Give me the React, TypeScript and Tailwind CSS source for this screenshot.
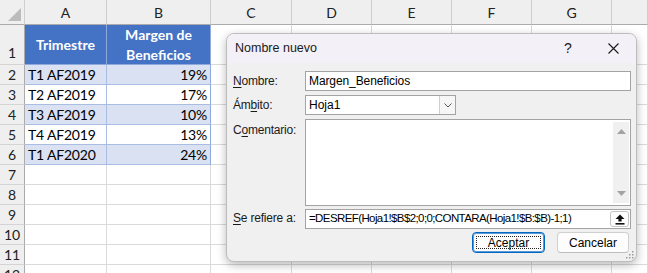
import React from "react";

const letters = ["A", "B", "C", "D", "E", "F", "G", ""];
const data: [string, string][] = [
  ["T1 AF2019", "19%"],
  ["T2 AF2019", "17%"],
  ["T3 AF2019", "10%"],
  ["T4 AF2019", "13%"],
  ["T1 AF2020", "24%"],
];

const gridFont = { fontFamily: "Lato, 'Liberation Sans', sans-serif" };
const uiFont = { fontFamily: "'Liberation Sans', Arial, sans-serif" };

function Sheet() {
  const cells: React.ReactNode[] = [];
  cells.push(
    <div
      key="corner"
      className="bg-[#efefef] border-r border-b border-r-[#cfcfcf] border-b-[#ababab] flex items-end justify-end pr-[3px] pb-[3px]"
    >
      <svg width="13" height="13" viewBox="0 0 13 13">
        <polygon points="13,0 13,13 0,13" fill="#bcbcbc" />
      </svg>
    </div>
  );
  letters.forEach((l, i) => {
    cells.push(
      <div
        key={"h" + i}
        className="bg-[#efefef] border-r border-b border-r-[#cdcdcd] border-b-[#ababab] flex items-center justify-center text-[14px] text-[#222]"
      >
        {l}
      </div>
    );
  });
  for (let r = 1; r <= 12; r++) {
    cells.push(
      <div
        key={"r" + r}
        className={
          "bg-[#efefef] border-r border-b border-r-[#ababab] border-b-[#d4d4d4] flex justify-center text-[14px] text-[#222] " +
          (r === 1 ? "items-end pb-[1px]" : "items-center")
        }
      >
        {r}
      </div>
    );
    for (let c = 0; c < 8; c++) {
      const key = `c${r}-${c}`;
      if (r === 1 && c === 0) {
        cells.push(
          <div
            key={key}
            className="bg-[#4472c4] border-r border-b border-r-[#8ea9db] border-b-[#8ea9db] flex items-center justify-center text-white font-bold text-[14px]"
          >
            Trimestre
          </div>
        );
      } else if (r === 1 && c === 1) {
        cells.push(
          <div
            key={key}
            className="bg-[#4472c4] border-r border-b border-r-[#8ea9db] border-b-[#8ea9db] flex flex-col items-center justify-center text-white font-bold text-[14px] leading-[20px]"
          >
            <span>Margen de</span>
            <span>Beneficios</span>
          </div>
        );
      } else if (r >= 2 && r <= 6 && c <= 1) {
        const band = r % 2 === 0;
        const txt = data[r - 2][c];
        cells.push(
          <div
            key={key}
            className={
              "border-r border-b border-b-[#a9bde3] flex items-center text-[14px] text-black tracking-[-0.2px] " +
              (band ? "bg-[#d9e1f2] " : "bg-white ") +
              (c === 0 ? "border-r-[#a9bde3] pl-[3px]" : "border-r-[#8ea9db] justify-end pr-[3px]")
            }
          >
            {txt}
          </div>
        );
      } else {
        cells.push(<div key={key} className="bg-white border-r border-b border-[#dadada]" />);
      }
    }
  }
  return (
    <div
      className="grid grid-cols-[25px_82px_104px_81px_80px_80px_80px_80px_36px] grid-rows-[25px_40px_repeat(11,20px)]"
      style={gridFont}
    >
      {cells}
    </div>
  );
}

function Label({ children }: { children: React.ReactNode }) {
  return <div className="w-[72px] shrink-0 text-[12px] tracking-[-0.2px] text-[#1a1a1a]">{children}</div>;
}

function Dialog() {
  return (
    <div
      className="absolute left-[226px] top-[33px] w-[411px] h-[229px] rounded-[8px] border border-[#bdbdbd] bg-[#f0f0f0] shadow-[0_3px_10px_rgba(0,0,0,0.28)] overflow-hidden flex flex-col"
      style={uiFont}
    >
      <div className="h-[29px] shrink-0 bg-[#f3f1f7] flex items-center pl-[8px]">
        <span className="flex-1 text-[12.5px] text-[#1a1a1a]">Nombre nuevo</span>
        <span className="w-[44px] text-center text-[14px] text-[#1a1a1a]">?</span>
        <span className="w-[46px] h-full flex items-center justify-center">
          <svg width="11" height="11" viewBox="0 0 11 11">
            <path d="M0.5 0.5 L10.5 10.5 M10.5 0.5 L0.5 10.5" stroke="#1a1a1a" strokeWidth="1.1" />
          </svg>
        </span>
      </div>
      <div className="flex flex-col pt-[8px] pl-[6px] pr-[5px]">
        <div className="h-[20px] flex items-center">
          <Label>
            <u className="underline-offset-2">N</u>ombre:
          </Label>
          <div className="flex-1 h-full border border-[#a3a3a3] bg-white flex items-center pl-[3px] text-[12px] tracking-[-0.1px] text-black">
            Margen_Beneficios
          </div>
        </div>
        <div className="h-[20px] mt-[4px] flex items-center">
          <Label>
            Ám<u className="underline-offset-2">b</u>ito:
          </Label>
          <div className="w-[151px] h-full border border-[#a3a3a3] bg-white flex">
            <div className="flex-1 flex items-center pl-[3px] text-[12px] text-black">Hoja1</div>
            <div className="w-[16px] border-l border-[#cfcfcf] bg-[#f6f6f6] flex items-center justify-center">
              <svg width="8" height="5" viewBox="0 0 8 5">
                <path d="M0.5 0.5 L4 4 L7.5 0.5" stroke="#555" strokeWidth="1" fill="none" />
              </svg>
            </div>
          </div>
        </div>
        <div className="h-[87px] mt-[4px] flex items-start">
          <div className="pt-[2px]">
            <Label>
              C<u className="underline-offset-2">o</u>mentario:
            </Label>
          </div>
          <div className="flex-1 h-full border border-[#a3a3a3] bg-white flex">
            <div className="flex-1" />
            <div className="w-[16px] my-[2px] mr-[1px] bg-[#f0f0f0] flex flex-col justify-between items-center py-[7px]">
              <svg width="9" height="5" viewBox="0 0 9 5">
                <polygon points="4.5,0 9,5 0,5" fill="#a3a3a3" />
              </svg>
              <svg width="9" height="5" viewBox="0 0 9 5">
                <polygon points="0,0 9,0 4.5,5" fill="#a3a3a3" />
              </svg>
            </div>
          </div>
        </div>
        <div className="h-[20px] mt-[3px] flex items-center">
          <div className="pb-[3px]">
            <Label>
              <u className="underline-offset-2">S</u>e refiere a:
            </Label>
          </div>
          <div className="flex-1 h-full border border-[#a3a3a3] bg-white flex items-center">
            <div className="flex-1 pl-[3px] text-[11.5px] tracking-[-0.6px] text-black whitespace-nowrap overflow-hidden">
              =DESREF(Hoja1!$B$2;0;0;CONTARA(Hoja1!$B:$B)-1;1)
            </div>
            <div className="w-[19px] h-[16px] mr-[1px] rounded-[3px] border border-[#c4c4c4] bg-white flex items-center justify-center">
              <svg width="10" height="11" viewBox="0 0 10 11">
                <path d="M5 0.5 L9.5 5 L6.6 5 L6.6 7.5 L3.4 7.5 L3.4 5 L0.5 5 Z" fill="#111" />
                <rect x="0.5" y="9" width="9" height="1.6" fill="#111" />
              </svg>
            </div>
          </div>
        </div>
        <div className="h-[21px] mt-[3px] flex justify-end gap-[12px] pr-[2px]">
          <div className="w-[73px] h-full rounded-[4px] border border-[#0067c0] shadow-[inset_0_0_0_1px_#5a9ad8] bg-[#fdfdfd] p-[3px]">
            <div className="w-full h-full border border-dotted border-[#222] flex items-center justify-center text-[12px] text-black">
              Aceptar
            </div>
          </div>
          <div className="w-[72px] h-full rounded-[4px] border border-[#d0d0d0] border-b-[#bdbdbd] bg-[#fdfdfd] flex items-center justify-center text-[12px] text-black">
            Cancelar
          </div>
        </div>
      </div>
      <div className="absolute right-[2px] bottom-[2px]">
        <svg width="8" height="8" viewBox="0 0 8 8">
          <rect x="6" y="0" width="1.5" height="1.5" fill="#9a9a9a" />
          <rect x="3" y="3" width="1.5" height="1.5" fill="#9a9a9a" />
          <rect x="6" y="3" width="1.5" height="1.5" fill="#9a9a9a" />
          <rect x="0" y="6" width="1.5" height="1.5" fill="#9a9a9a" />
          <rect x="3" y="6" width="1.5" height="1.5" fill="#9a9a9a" />
          <rect x="6" y="6" width="1.5" height="1.5" fill="#9a9a9a" />
        </svg>
      </div>
    </div>
  );
}

export default function App() {
  return (
    <div className="relative w-[648px] h-[273px] overflow-hidden bg-white">
      <Sheet />
      <Dialog />
    </div>
  );
}
